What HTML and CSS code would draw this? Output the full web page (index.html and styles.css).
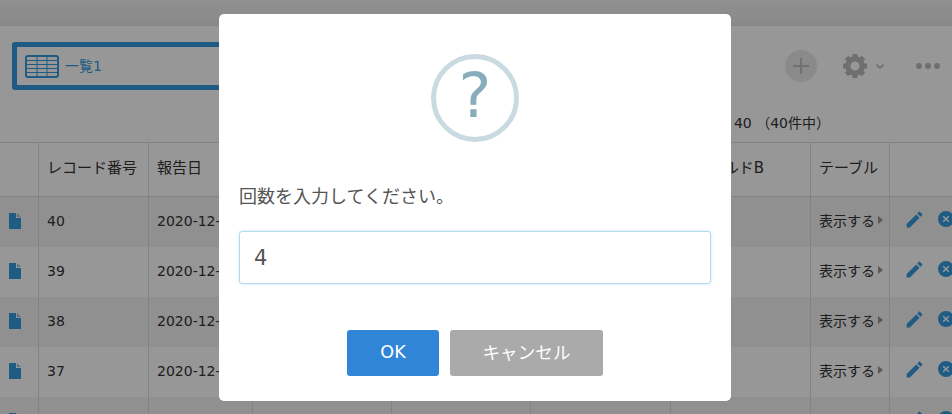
FILE: index.html
```html
<!DOCTYPE html>
<html lang="ja">
<head>
  <meta charset="UTF-8">
  <title>一覧1</title>
  <link rel="stylesheet" href="styles.css">
</head>
<body>
  <div class="topbar"></div>

  <div class="toolbar">
    <div class="view-select">
      <svg class="view-icon" width="34" height="23" viewBox="0 0 34 23">
        <rect x="1" y="1" width="32" height="21" rx="2" fill="none" stroke="currentColor" stroke-width="2"/>
        <path d="M1 5.500H33M1 9.500H33M1 13.500H33M1 17.500H33M12 1V22M22 1V22" fill="none" stroke="currentColor" stroke-width="1"/>
      </svg>
      <span class="view-name">一覧1</span>
    </div>
    <div class="tools">
      <button class="add-btn">
        <svg width="18" height="18" viewBox="0 0 18 18"><path d="M9 1V17M1 9H17" stroke="currentColor" stroke-width="2"/></svg>
      </button>
      <svg class="gear" width="24" height="24" viewBox="0 0 24 24">
        <circle cx="12" cy="12" r="7.200" fill="none" stroke="currentColor" stroke-width="5.400"/>
        <g fill="currentColor">
          <rect x="9.500" y="0" width="5" height="5"/>
          <rect x="9.500" y="19" width="5" height="5"/>
          <rect x="0" y="9.500" width="5" height="5"/>
          <rect x="19" y="9.500" width="5" height="5"/>
          <rect x="9.500" y="0" width="5" height="5" transform="rotate(45 12 12)"/>
          <rect x="9.500" y="19" width="5" height="5" transform="rotate(45 12 12)"/>
          <rect x="0" y="9.500" width="5" height="5" transform="rotate(45 12 12)"/>
          <rect x="19" y="9.500" width="5" height="5" transform="rotate(45 12 12)"/>
        </g>
      </svg>
      <svg class="chevron" width="8" height="5" viewBox="0 0 8 5"><path d="M0.500 0.500L4 4L7.500 0.500" fill="none" stroke="currentColor" stroke-width="1.200"/></svg>
      <div class="dots"><i></i><i></i><i></i></div>
    </div>
  </div>

  <div class="pager">1 - 40 （40件中）</div>

  <table class="records">
    <thead>
      <tr>
        <th></th>
        <th>レコード番号</th>
        <th>報告日</th>
        <th></th>
        <th></th>
        <th></th>
        <th>フィールドB</th>
        <th>テーブル</th>
        <th></th>
      </tr>
    </thead>
    <tbody>
      <tr>
        <td class="doc"><svg width="12" height="16" viewBox="0 0 12 16"><path d="M0 0H7V5H12V16H0Z" fill="currentColor"/><path d="M8 0L12 4H8Z" fill="currentColor" opacity=".55"/></svg></td>
        <td>40</td><td>2020-12-25</td><td></td><td></td><td></td><td></td>
        <td><span class="more">表示する</span></td>
        <td><div class="actions">
          <svg width="21" height="21" viewBox="0 0 24 24"><path d="M3 17.250V21h3.750L17.810 9.940l-3.750-3.750L3 17.250zM20.710 7.040c.39-.39.39-1.020 0-1.410l-2.340-2.340c-.39-.39-1.020-.39-1.410 0l-1.830 1.830 3.750 3.750 1.830-1.830z" fill="currentColor"/></svg>
          <svg width="16" height="16" viewBox="0 0 16 16"><circle cx="8" cy="8" r="8" fill="currentColor"/><path d="M5.200 5.200L10.800 10.800M10.800 5.200L5.200 10.800" stroke="#fff" stroke-width="1.400"/></svg>
        </div></td>
      </tr>
      <tr>
        <td class="doc"><svg width="12" height="16" viewBox="0 0 12 16"><path d="M0 0H7V5H12V16H0Z" fill="currentColor"/><path d="M8 0L12 4H8Z" fill="currentColor" opacity=".55"/></svg></td>
        <td>39</td><td>2020-12-25</td><td></td><td></td><td></td><td></td>
        <td><span class="more">表示する</span></td>
        <td><div class="actions">
          <svg width="21" height="21" viewBox="0 0 24 24"><path d="M3 17.250V21h3.750L17.810 9.940l-3.750-3.750L3 17.250zM20.710 7.040c.39-.39.39-1.020 0-1.410l-2.340-2.340c-.39-.39-1.020-.39-1.410 0l-1.830 1.830 3.750 3.750 1.830-1.830z" fill="currentColor"/></svg>
          <svg width="16" height="16" viewBox="0 0 16 16"><circle cx="8" cy="8" r="8" fill="currentColor"/><path d="M5.200 5.200L10.800 10.800M10.800 5.200L5.200 10.800" stroke="#fff" stroke-width="1.400"/></svg>
        </div></td>
      </tr>
      <tr>
        <td class="doc"><svg width="12" height="16" viewBox="0 0 12 16"><path d="M0 0H7V5H12V16H0Z" fill="currentColor"/><path d="M8 0L12 4H8Z" fill="currentColor" opacity=".55"/></svg></td>
        <td>38</td><td>2020-12-25</td><td></td><td></td><td></td><td></td>
        <td><span class="more">表示する</span></td>
        <td><div class="actions">
          <svg width="21" height="21" viewBox="0 0 24 24"><path d="M3 17.250V21h3.750L17.810 9.940l-3.750-3.750L3 17.250zM20.710 7.040c.39-.39.39-1.020 0-1.410l-2.340-2.340c-.39-.39-1.020-.39-1.410 0l-1.830 1.830 3.750 3.750 1.830-1.830z" fill="currentColor"/></svg>
          <svg width="16" height="16" viewBox="0 0 16 16"><circle cx="8" cy="8" r="8" fill="currentColor"/><path d="M5.200 5.200L10.800 10.800M10.800 5.200L5.200 10.800" stroke="#fff" stroke-width="1.400"/></svg>
        </div></td>
      </tr>
      <tr>
        <td class="doc"><svg width="12" height="16" viewBox="0 0 12 16"><path d="M0 0H7V5H12V16H0Z" fill="currentColor"/><path d="M8 0L12 4H8Z" fill="currentColor" opacity=".55"/></svg></td>
        <td>37</td><td>2020-12-25</td><td></td><td></td><td></td><td></td>
        <td><span class="more">表示する</span></td>
        <td><div class="actions">
          <svg width="21" height="21" viewBox="0 0 24 24"><path d="M3 17.250V21h3.750L17.810 9.940l-3.750-3.750L3 17.250zM20.710 7.040c.39-.39.39-1.020 0-1.410l-2.340-2.340c-.39-.39-1.020-.39-1.410 0l-1.830 1.830 3.750 3.750 1.830-1.830z" fill="currentColor"/></svg>
          <svg width="16" height="16" viewBox="0 0 16 16"><circle cx="8" cy="8" r="8" fill="currentColor"/><path d="M5.200 5.200L10.800 10.800M10.800 5.200L5.200 10.800" stroke="#fff" stroke-width="1.400"/></svg>
        </div></td>
      </tr>
      <!-- only the tops of the icons show in this row -->
      <tr>
        <td class="doc"><svg width="12" height="16" viewBox="0 0 12 16"><path d="M0 0H7V5H12V16H0Z" fill="currentColor"/><path d="M8 0L12 4H8Z" fill="currentColor" opacity=".55"/></svg></td>
        <td></td><td></td><td></td><td></td><td></td><td></td><td></td>
        <td><div class="actions">
          <svg width="21" height="21" viewBox="0 0 24 24"><path d="M3 17.250V21h3.750L17.810 9.940l-3.750-3.750L3 17.250zM20.710 7.040c.39-.39.39-1.020 0-1.410l-2.340-2.340c-.39-.39-1.020-.39-1.410 0l-1.830 1.830 3.750 3.750 1.830-1.830z" fill="currentColor"/></svg>
          <svg width="16" height="16" viewBox="0 0 16 16"><circle cx="8" cy="8" r="8" fill="currentColor"/><path d="M5.200 5.200L10.800 10.800M10.800 5.200L5.200 10.800" stroke="#fff" stroke-width="1.400"/></svg>
        </div></td>
      </tr>
    </tbody>
  </table>

  <div class="overlay">
    <div class="dialog">
      <div class="question">?</div>
      <p class="prompt">回数を入力してください。</p>
      <input class="count-input" type="text" value="4">
      <div class="buttons">
        <button class="btn btn-ok">OK</button>
        <button class="btn btn-cancel">キャンセル</button>
      </div>
    </div>
  </div>
</body>
</html>
```

FILE: styles.css
```css
body {
  margin: 0;
  height: 414px;
  overflow: hidden;
  font-family: "DejaVu Sans", "Noto Sans CJK JP", sans-serif;
  font-size: 14px;
  color: #333;
  background: #fcfcfc;
}

.topbar {
  height: 25px;
  background: linear-gradient(#efefef, #e6e6e6);
  border-bottom: 1px solid #dcdcdc;
}

.toolbar {
  display: flex;
  justify-content: space-between;
  align-items: center;
  padding: 16px 12px 0;
}

.view-select {
  display: flex;
  align-items: center;
  gap: 6px;
  width: 300px;
  height: 48px;
  box-sizing: border-box;
  padding-left: 8px;
  border: 5px solid #3498db;
  border-radius: 3px;
  color: #3498db;
}

.view-icon {
  flex-shrink: 0;
}

.view-name {
  margin-bottom: 3px;
}

.tools {
  display: flex;
  align-items: center;
  color: #b9b9b9;
}

.add-btn {
  display: flex;
  justify-content: center;
  align-items: center;
  width: 32px;
  height: 32px;
  padding: 0;
  border: none;
  border-radius: 50%;
  background: #e6e6e6;
  color: #bdbdbd;
}

.gear {
  margin-left: 26px;
}

.chevron {
  margin-left: 9px;
  color: #a8a8a8;
}

.dots {
  display: flex;
  gap: 3px;
  margin-left: 32px;
}

.dots i {
  width: 6px;
  height: 6px;
  border-radius: 50%;
  background: #b9b9b9;
}

.pager {
  height: 52px;
  line-height: 67px;
  padding-right: 122px;
  text-align: right;
}

.records {
  width: 952px;
  table-layout: fixed;
  border-collapse: separate;
  border-spacing: 0;
}

.records th,
.records td {
  box-sizing: border-box;
  padding: 0 0 0 8px;
  border-right: 1px solid #d3dcdc;
  text-align: left;
  white-space: nowrap;
  overflow: hidden;
}

.records th {
  height: 55px;
  padding-bottom: 6px;
  border-top: 1px solid #d3dcdc;
  border-bottom: 1px solid #d3dcdc;
  font-size: 15px;
  font-weight: normal;
}

.records th:nth-child(1) { width: 39px; }
.records th:nth-child(2) { width: 110px; }
.records th:nth-child(3) { width: 104px; }
.records th:nth-child(4) { width: 139px; }
.records th:nth-child(5) { width: 139px; }
.records th:nth-child(6) { width: 140px; }
.records th:nth-child(7) { width: 140px; }
.records th:nth-child(8) { width: 79px; }
.records th:nth-child(9) { width: 62px; border-right: none; }

.records td {
  height: 50px;
  padding-bottom: 2px;
}

.records td:last-child {
  border-right: none;
  overflow: visible;
}

.records tbody tr:nth-child(odd) {
  background: #f0f0f0;
}

.records tbody tr:nth-child(even) {
  background: #fcfcfc;
}

.records .doc {
  padding-left: 9px;
  color: #3498db;
  line-height: 0;
}

.more {
  position: relative;
  top: -1px;
}

.more::after {
  content: "";
  display: inline-block;
  margin-left: 3px;
  vertical-align: 2px;
  border-left: 5px solid #a09088;
  border-top: 4px solid transparent;
  border-bottom: 4px solid transparent;
}

.actions {
  display: flex;
  align-items: center;
  gap: 13px;
  padding-left: 6px;
  padding-bottom: 4px;
  color: #3498db;
}

.actions svg {
  flex-shrink: 0;
}

/* dimmed layer with the prompt on top */
.overlay {
  position: absolute;
  top: 0;
  left: 0;
  right: 0;
  bottom: 0;
  display: flex;
  justify-content: center;
  align-items: flex-start;
  padding: 14px 0;
  background: rgba(0, 0, 0, 0.4);
}

.dialog {
  display: flex;
  flex-direction: column;
  box-sizing: border-box;
  width: 512px;
  height: 387px;
  margin-right: 2px;
  padding: 40px 20px 25px;
  border-radius: 5px;
  background: #fff;
}

.question {
  align-self: center;
  width: 88px;
  height: 88px;
  box-sizing: border-box;
  border: 5px solid #c9dae1;
  border-radius: 50%;
  color: #87adbd;
  font-size: 62px;
  line-height: 73px;
  text-align: center;
}

.prompt {
  margin: 41px 0 21px;
  color: #545454;
  font-size: 18px;
  line-height: 27px;
}

.count-input {
  height: 53px;
  box-sizing: border-box;
  padding: 0 14px;
  border: 1px solid #b4dbed;
  border-radius: 3px;
  outline: none;
  box-shadow: 0 0 3px #c4e6f5;
  color: #545454;
  font-family: inherit;
  font-size: 21px;
}

.buttons {
  display: flex;
  justify-content: center;
  gap: 11px;
  margin-top: 46px;
}

.btn {
  height: 46px;
  padding: 0 32.500px 3px;
  border: none;
  border-radius: 3px;
  color: #fff;
  font-family: inherit;
  font-size: 17.600px;
}

.btn-ok {
  width: 92px;
  padding: 0 0 2px;
  background: #3085d6;
}

.btn-cancel {
  background: #aaa;
}
```
